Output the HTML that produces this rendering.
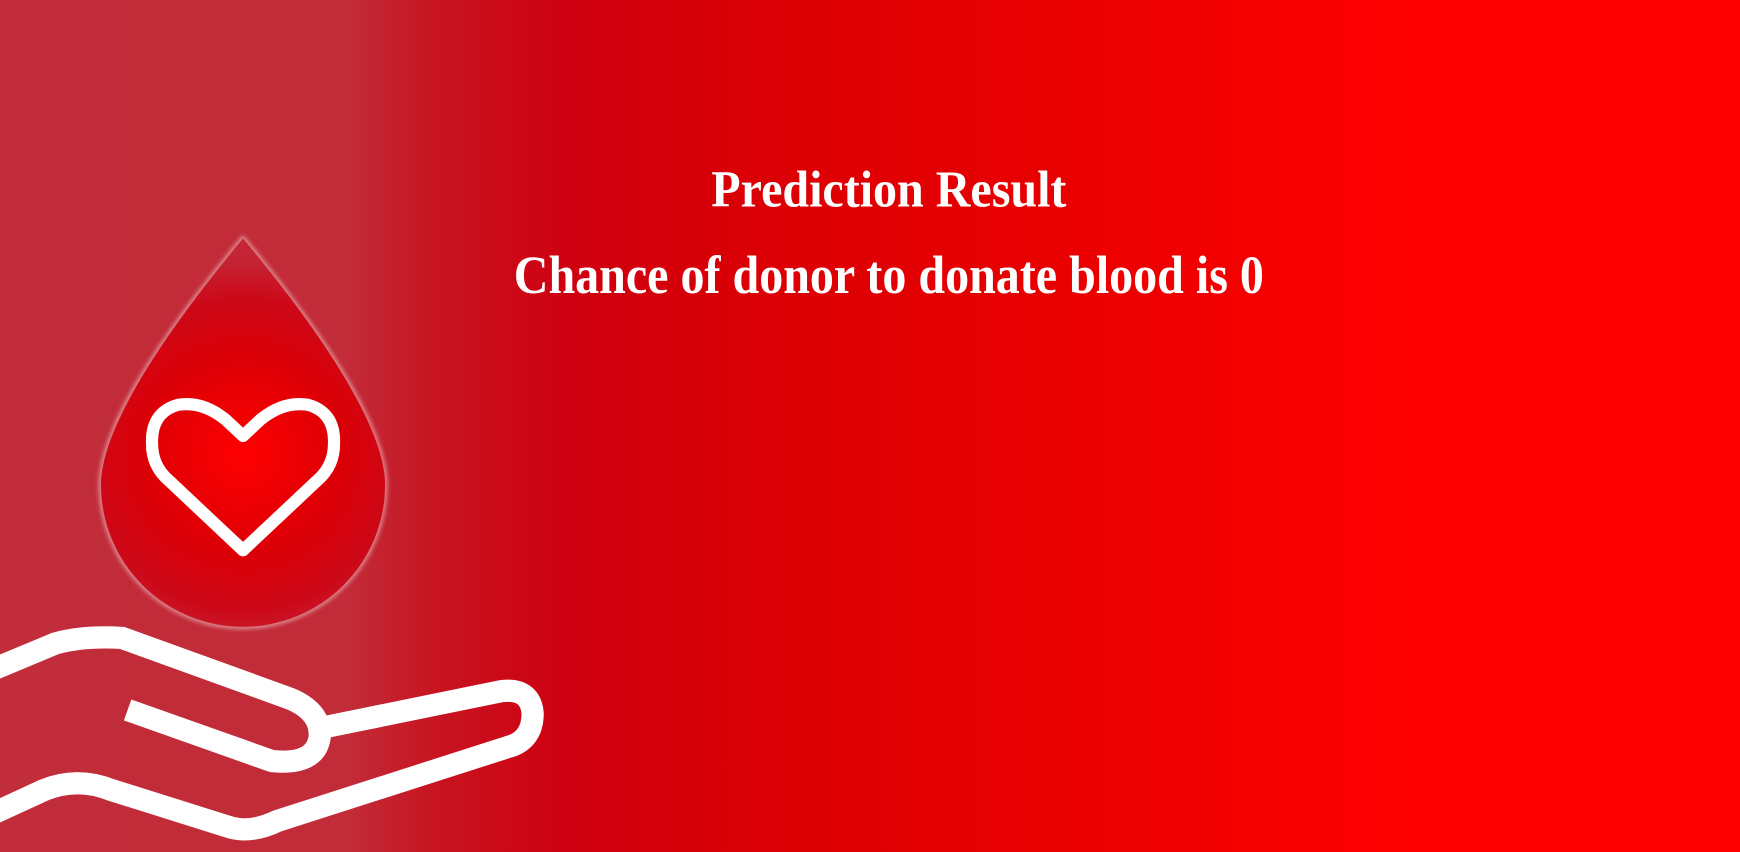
<!DOCTYPE html>
<html><head><meta charset="utf-8"><style>
html,body{margin:0;padding:0;width:1740px;height:852px;overflow:hidden}
body{background:linear-gradient(90deg,#c12d3a 0%,#c22b38 20%,#c8121f 25.5%,#cf0010 33%,#da0005 43%,#e80000 60%,#f70000 75%,#ff0000 82%,#ff0000 100%)}
svg{position:absolute;left:0;top:0}
</style></head><body>
<svg width="1740" height="852" viewBox="0 0 1568 768" preserveAspectRatio="none">
<defs>
<radialGradient id="g" cx="219" cy="410" r="175" gradientUnits="userSpaceOnUse">
<stop offset="0" stop-color="#ff0000"/><stop offset="0.5" stop-color="#dc0006"/><stop offset="0.8" stop-color="#cc0818"/><stop offset="1" stop-color="#c42433"/>
</radialGradient>
<filter id="b"><feGaussianBlur stdDeviation="2"/></filter>
</defs>
<path d="M219 215 C190 250 91 370 91 437 A128 128 0 0 0 347 437 C347 370 248 250 219 215 Z" fill="none" stroke="#fff" stroke-opacity="0.5" stroke-width="4" filter="url(#b)"/>
<path d="M219 215 C190 250 91 370 91 437 A128 128 0 0 0 347 437 C347 370 248 250 219 215 Z" fill="url(#g)"/>
<path d="M219 393 L203 378 Q182 361 160 365 Q136 372 137 400 Q137 420 152 433 L219 496 L286 433 Q301 420 301 400 Q302 372 278 365 Q256 361 235 378 Z" fill="none" stroke="#fff" stroke-width="11" stroke-linejoin="round"/>
<g fill="none" stroke="#fff" stroke-width="20">
<path d="M-10 605 L50 580 Q75 573 110 575 L262 630 Q290 642 288 665 Q284 690 245 686 L115 640"/>
<path d="M290 656 L452 623 Q478 620 480 643 Q480 665 462 672 L250 740 Q225 752 205 745 L100 712 Q70 700 40 712 L-10 735"/>
</g>
<g fill="#fff" font-family="'Liberation Serif',serif" font-weight="bold">
<text x="641" y="186" font-size="47" textLength="320" lengthAdjust="spacingAndGlyphs">Prediction Result</text>
<text x="463" y="264" font-size="49" textLength="676" lengthAdjust="spacingAndGlyphs">Chance of donor to donate blood is 0</text>
</g>
</svg>
</body></html>
